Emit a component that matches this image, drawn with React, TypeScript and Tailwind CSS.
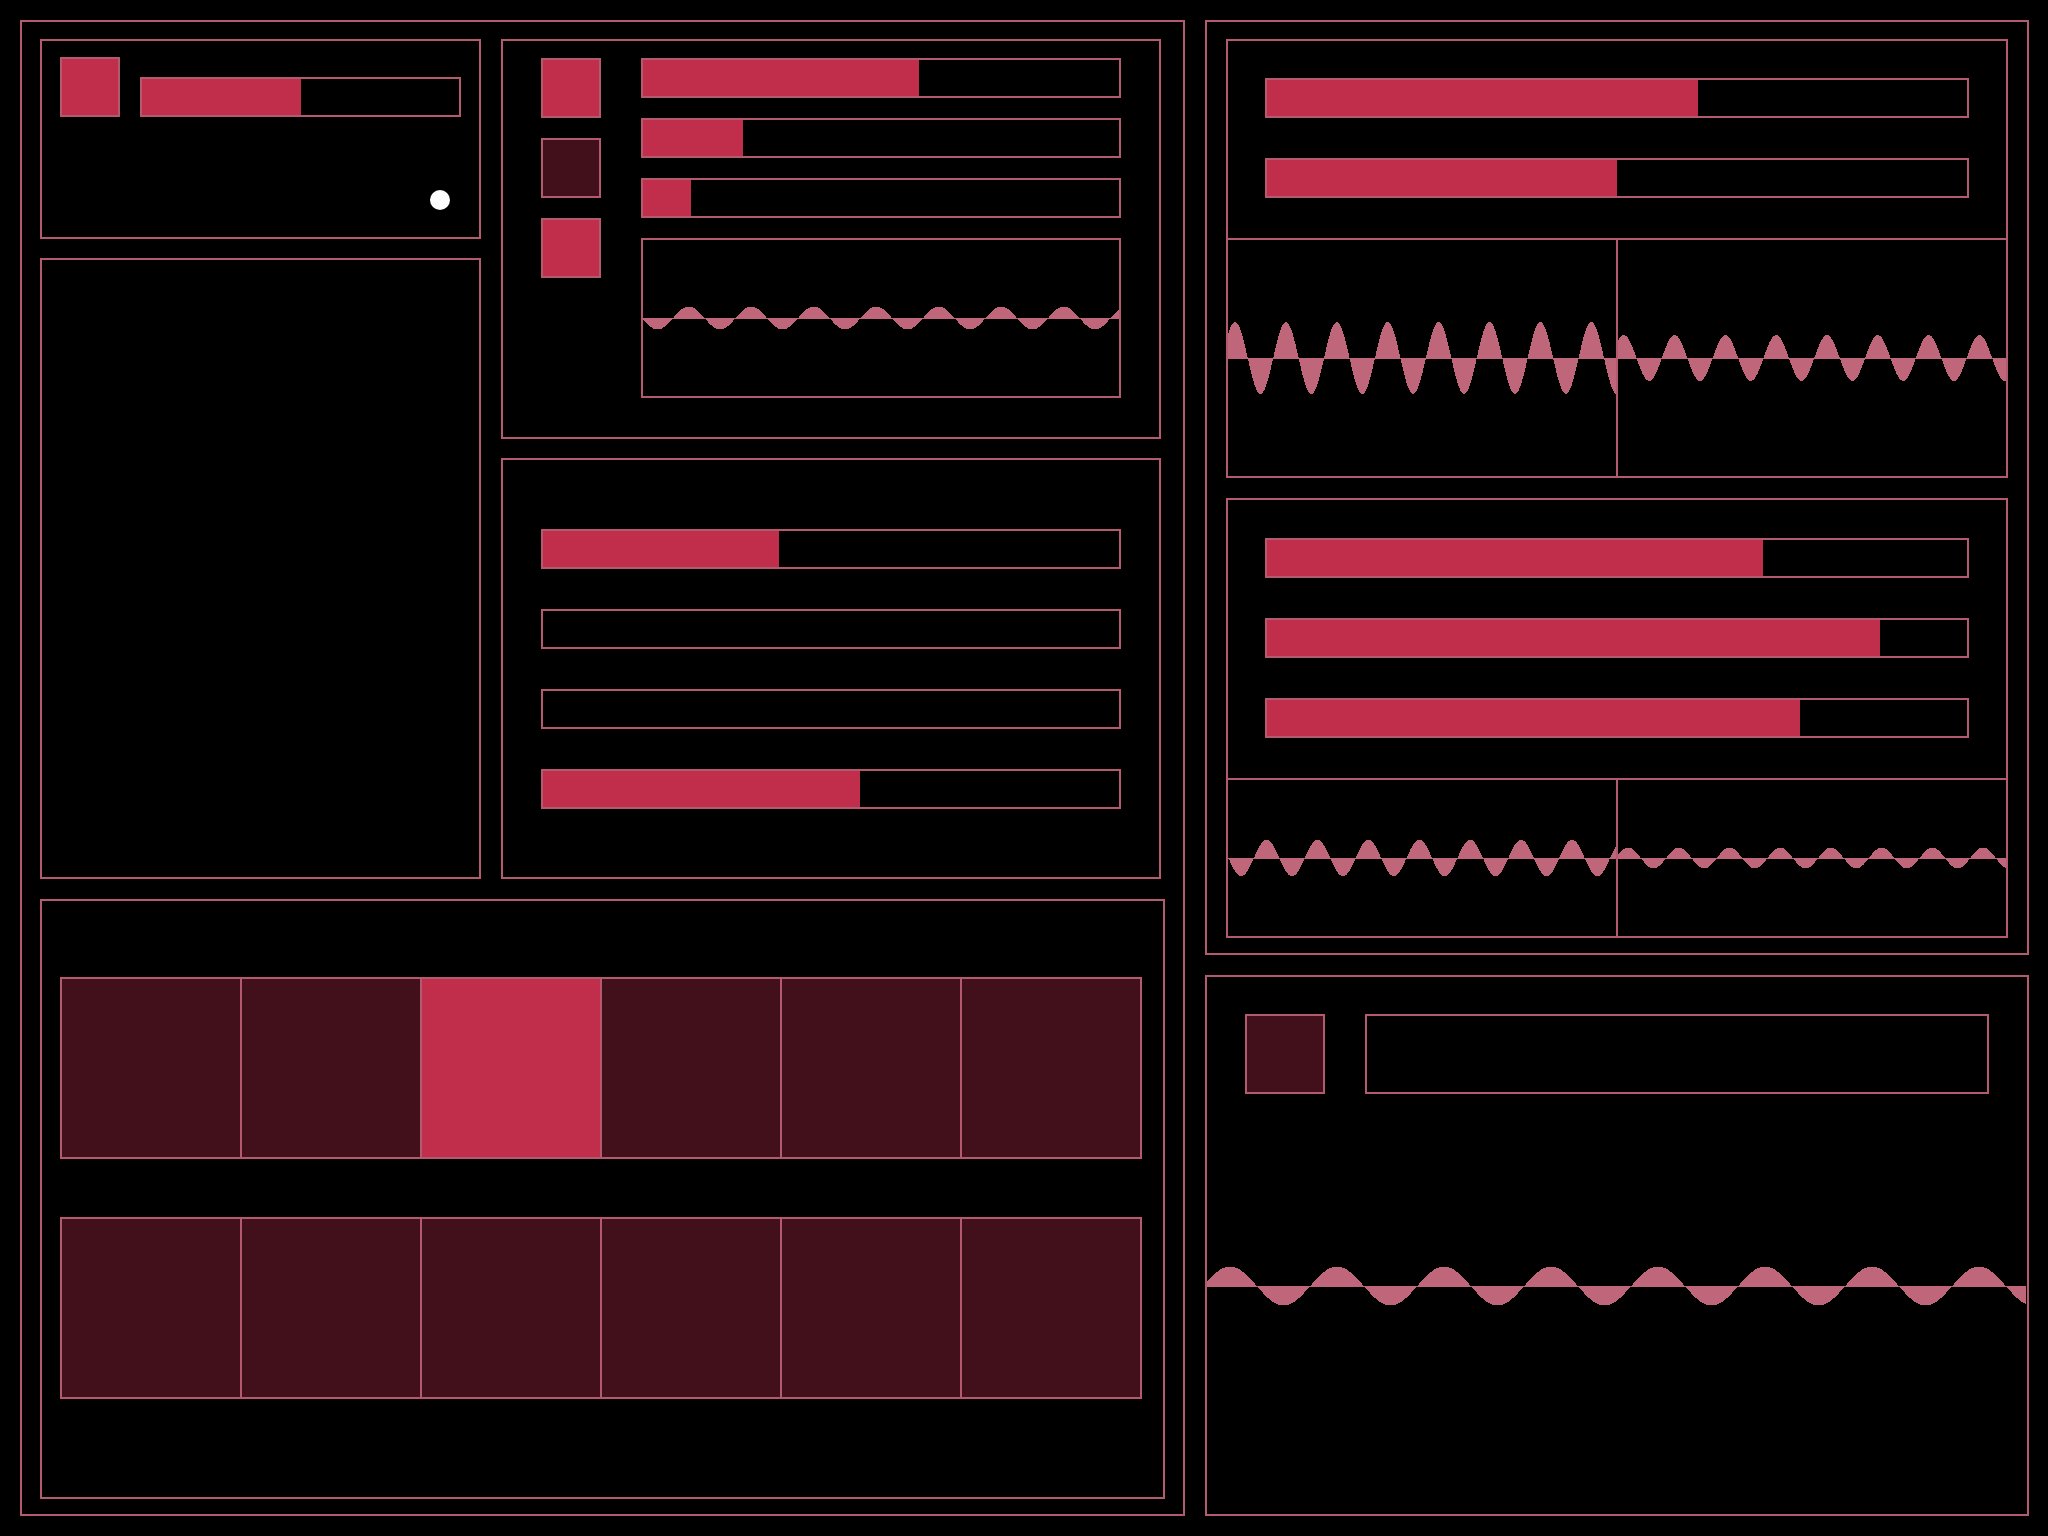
import React from "react";

const LINE = "border-[#b35a6e]";
const RED = "bg-[#c02e4c]";
const DARK = "bg-[#42101b]";
const WAVE = "#c0667a";

function wavePath(w: number, h: number, amp: number, period: number, peak: number) {
  const c = h / 2;
  let d = `M0 ${c}`;
  for (let x = 0; x <= w; x += 1) {
    const y = c - amp * Math.cos((2 * Math.PI * (x - peak)) / period);
    d += ` L${x} ${y.toFixed(2)}`;
  }
  d += ` L${w} ${c} Z`;
  return d;
}

function Wave({ w, h, amp, period, peak }: { w: number; h: number; amp: number; period: number; peak: number }) {
  return (
    <svg
      width={w}
      height={h}
      viewBox={`0 0 ${w} ${h}`}
      className="block shrink-0"
      shapeRendering="crispEdges"
    >
      <rect x={0} y={h / 2 - 0.5} width={w} height={1} fill={WAVE} />
      <path d={wavePath(w, h, amp, period, peak)} fill={WAVE} />
    </svg>
  );
}

function Bar({ value, className = "h-10" }: { value: number; className?: string }) {
  return (
    <div className={`${className} border-2 ${LINE} shrink-0`}>
      <div className={`h-full ${RED}`} style={{ width: `${value}%` }} />
    </div>
  );
}

function Square({ fill }: { fill: "red" | "dark" }) {
  return <div className={`w-[60px] h-[60px] border-2 ${LINE} ${fill === "red" ? RED : DARK} shrink-0`} />;
}

function Cells({ active }: { active: number }) {
  return (
    <div className={`w-[1082px] h-[182px] border-2 ${LINE} flex shrink-0`}>
      {[0, 1, 2, 3, 4, 5].map((i) => (
        <div
          key={i}
          className={`flex-1 ${i === 0 ? "" : `border-l-2 ${LINE}`} ${i === active ? RED : DARK}`}
        />
      ))}
    </div>
  );
}

export default function App() {
  return (
    <div className="w-[2048px] h-[1536px] bg-black p-5 flex gap-5 overflow-hidden">
      {/* Left container */}
      <div className={`w-[1165px] h-full border-2 ${LINE} pt-[17px] px-[18px] pb-[15px] flex flex-col gap-5 shrink-0`}>
        <div className="flex gap-5 h-[840px] shrink-0">
          <div className="w-[441px] flex flex-col gap-[19px] shrink-0">
            {/* Panel A */}
            <div className={`relative h-[200px] border-2 ${LINE} pt-4 px-[18px] shrink-0`}>
              <div className="flex items-end gap-5">
                <Square fill="red" />
                <div className="flex-1">
                  <Bar value={50} />
                </div>
              </div>
              <div className="absolute left-[388px] top-[149px] w-5 h-5 rounded-full bg-white" />
            </div>
            {/* Panel B */}
            <div className={`flex-1 border-2 ${LINE}`} />
          </div>
          <div className="w-[660px] flex flex-col gap-[19px] shrink-0">
            {/* Panel C */}
            <div className={`h-[400px] border-2 ${LINE} pt-[17px] px-[38px] flex gap-10 shrink-0`}>
              <div className="flex flex-col gap-5">
                <Square fill="red" />
                <Square fill="dark" />
                <Square fill="red" />
              </div>
              <div className="flex-1 flex flex-col gap-5">
                <Bar value={58} />
                <Bar value={21} />
                <Bar value={10} />
                <div className={`h-[160px] border-2 ${LINE} flex items-center overflow-hidden`}>
                  <Wave w={476} h={40} amp={11.5} period={62.5} peak={45.8} />
                </div>
              </div>
            </div>
            {/* Panel D */}
            <div className={`flex-1 border-2 ${LINE} px-[38px] flex flex-col justify-center gap-10`}>
              <Bar value={41} />
              <Bar value={0} />
              <Bar value={0} />
              <Bar value={55} />
            </div>
          </div>
        </div>
        {/* Panel E */}
        <div className={`flex-1 border-2 ${LINE} pt-[76px] px-[18px] flex flex-col gap-[58px]`}>
          <Cells active={2} />
          <Cells active={-1} />
        </div>
      </div>

      {/* Right column */}
      <div className="flex-1 flex flex-col gap-5">
        <div className={`border-2 ${LINE} pt-[17px] px-[19px] pb-[15px] flex flex-col gap-5 shrink-0`}>
          {/* Panel F */}
          <div className={`h-[439px] border-2 ${LINE} flex flex-col`}>
            <div className={`border-b-2 ${LINE} pt-[37px] pb-[40px] px-[37px] flex flex-col gap-10`}>
              <Bar value={61.6} />
              <Bar value={50} />
            </div>
            <div className="flex-1 flex">
              <div className="flex-1 flex items-center overflow-hidden">
                <Wave w={388} h={90} amp={36} period={50.9} peak={7} />
              </div>
              <div className={`flex-1 border-l-2 ${LINE} flex items-center overflow-hidden`}>
                <Wave w={388} h={60} amp={23} period={50.8} peak={5.8} />
              </div>
            </div>
          </div>
          {/* Panel G */}
          <div className={`h-[440px] border-2 ${LINE} flex flex-col`}>
            <div className={`border-b-2 ${LINE} pt-[38px] pb-[40px] px-[37px] flex flex-col gap-10`}>
              <Bar value={70.9} />
              <Bar value={87.6} />
              <Bar value={76.1} />
            </div>
            <div className="flex-1 flex">
              <div className="flex-1 flex items-center overflow-hidden">
                <Wave w={388} h={50} amp={18.3} period={50.9} peak={38.6} />
              </div>
              <div className={`flex-1 border-l-2 ${LINE} flex items-center overflow-hidden`}>
                <Wave w={388} h={30} amp={10.5} period={50.7} peak={10.1} />
              </div>
            </div>
          </div>
        </div>
        {/* Bottom right */}
        <div className={`flex-1 border-2 ${LINE} flex flex-col overflow-hidden`}>
          <div className="flex gap-10 pt-[37px] px-[38px]">
            <div className={`w-20 h-20 border-2 ${LINE} ${DARK} shrink-0`} />
            <div className={`flex-1 h-20 border-2 ${LINE}`} />
          </div>
          <div className="mt-[132px]">
            <Wave w={819} h={120} amp={19.5} period={107} peak={23} />
          </div>
        </div>
      </div>
    </div>
  );
}
